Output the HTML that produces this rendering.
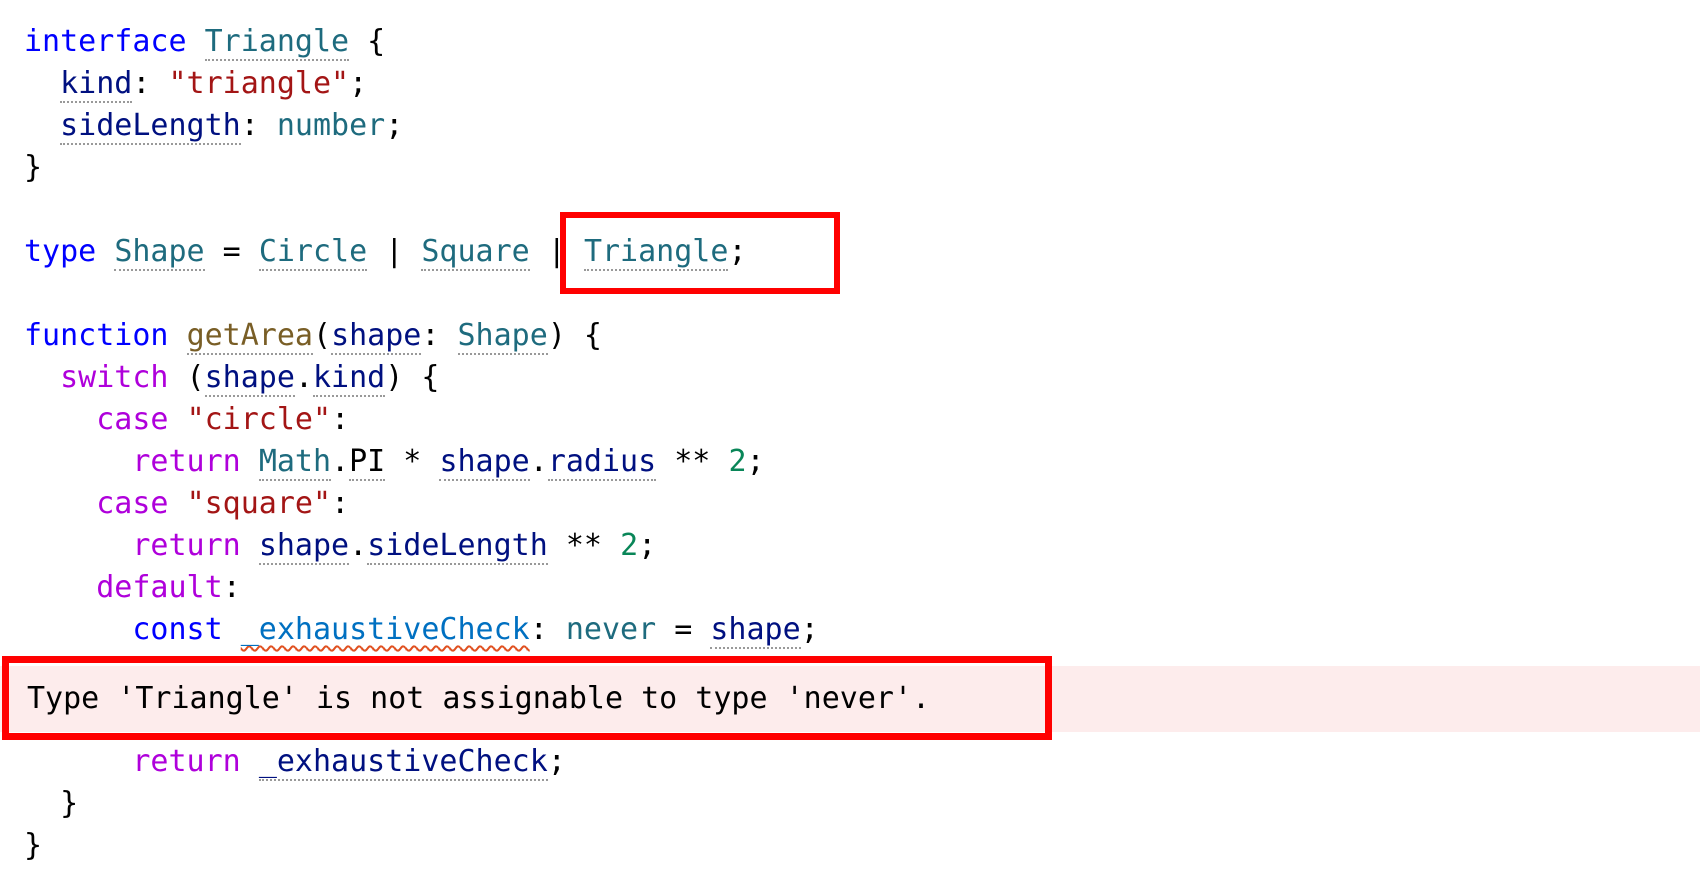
<!DOCTYPE html>
<html><head><meta charset="utf-8"><style>
html,body{margin:0;padding:0;background:#fff;width:1700px;height:888px;overflow:hidden;position:relative}
.code{position:absolute;left:24px;top:21px;font-family:"DejaVu Sans Mono","Liberation Mono",monospace;font-size:30px;line-height:42px;white-space:pre;color:#000}
.k{color:#0000ff}.t{color:#1e6b7e}.p{color:#001080}.s{color:#a31515}.c{color:#af00db}.f{color:#795e26}.n{color:#098658}.v{color:#0070c1}
.u{border-bottom:2px dotted #999;}
.sq{text-decoration:underline wavy #e05020;text-underline-offset:6px;text-decoration-thickness:2px}
.err{height:90px}
.band{position:absolute;left:0;top:666px;width:1700px;height:66px;background:#fdecec}
.box1{position:absolute;left:560px;top:212px;width:268px;height:70px;border:6px solid #ff0000}
.box2{position:absolute;left:2px;top:656px;width:1036px;height:70px;border:7px solid #ff0000}
.msg{position:absolute;left:27px;top:678px;font-family:"DejaVu Sans Mono","Liberation Mono",monospace;font-size:30px;line-height:42px;white-space:pre;color:#000}
</style></head><body>
<div class="band"></div>
<div class="code"><span class="k">interface</span> <span class="t u">Triangle</span> {
  <span class="p u">kind</span>: <span class="s">"triangle"</span>;
  <span class="p u">sideLength</span>: <span class="t">number</span>;
}

<span class="k">type</span> <span class="t u">Shape</span> = <span class="t u">Circle</span> | <span class="t u">Square</span> | <span class="t u">Triangle</span>;

<span class="k">function</span> <span class="f u">getArea</span>(<span class="p u">shape</span>: <span class="t u">Shape</span>) {
  <span class="c">switch</span> (<span class="p u">shape</span>.<span class="p u">kind</span>) {
    <span class="c">case</span> <span class="s">"circle"</span>:
      <span class="c">return</span> <span class="t u">Math</span>.<span class="u">PI</span> * <span class="p u">shape</span>.<span class="p u">radius</span> ** <span class="n">2</span>;
    <span class="c">case</span> <span class="s">"square"</span>:
      <span class="c">return</span> <span class="p u">shape</span>.<span class="p u">sideLength</span> ** <span class="n">2</span>;
    <span class="c">default</span>:
      <span class="k">const</span> <span class="v sq">_exhaustiveCheck</span>: <span class="t">never</span> = <span class="p u">shape</span>;
<div class="err"></div>      <span class="c">return</span> <span class="p u">_exhaustiveCheck</span>;
  }
}</div>
<div class="msg">Type 'Triangle' is not assignable to type 'never'.</div>
<div class="box1"></div>
<div class="box2"></div>
</body></html>
